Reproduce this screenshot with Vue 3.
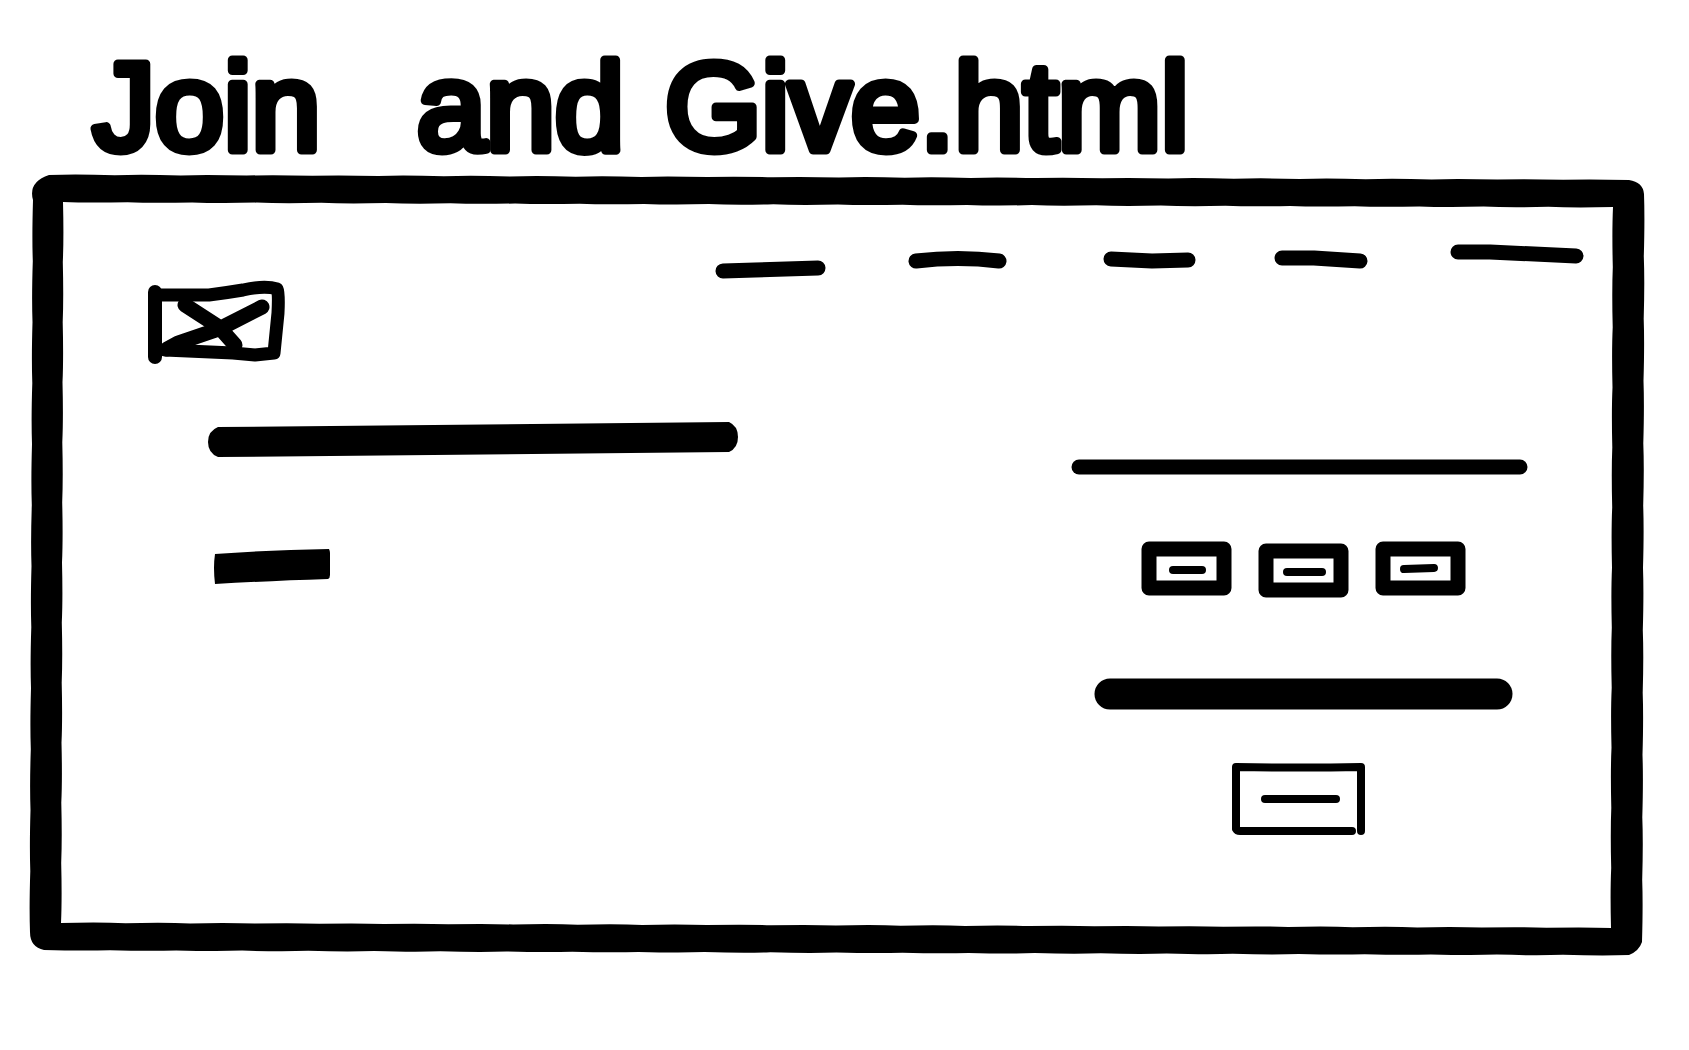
<script setup>
const wave = (x1, y1, x2, y2, steps, amp) => {
  let d = ''
  const len = Math.hypot(x2 - x1, y2 - y1)
  const nx = (y2 - y1) / len
  const ny = -(x2 - x1) / len
  for (let i = 0; i < steps; i++) {
    const m = (i + 0.4) / steps
    const e = (i + 1) / steps
    const mx = x1 + (x2 - x1) * m + nx * amp
    const my = y1 + (y2 - y1) * m + ny * amp
    d += `Q${mx.toFixed(1)} ${my.toFixed(1)} ${(x1 + (x2 - x1) * e).toFixed(1)} ${(y1 + (y2 - y1) * e).toFixed(1)}`
  }
  return d
}

const outline =
  'M20 1' + wave(20, 1, 1600, 6, 24, 1) +
  'Q1614 8 1615 20' + wave(1615, 20, 1613, 768, 12, 1) +
  'Q1610 777 1600 781' + wave(1600, 781, 15, 776, 24, 1) +
  'Q1 773 1 758' + wave(1, 758, 4, 26, 12, 1) +
  'Q-1 8 20 1Z' +
  'M34 28' + wave(34, 28, 1584, 33, 24, -1) +
  wave(1584, 33, 1582, 754, 12, -1) +
  wave(1582, 754, 32, 749, 24, -1) +
  wave(32, 749, 34, 28, 12, -1) + 'Z'

const links = [
  { name: 'Home', width: 111, d: 'M8 31L40 30L103 28' },
  { name: 'About', width: 114, d: 'M8 21Q50 16 91 21' },
  { name: 'Join', width: 88, d: 'M7 19L48 21L84 20' },
  { name: 'Give', width: 94, d: 'M8 18L40 18L86 21' },
  { name: 'Contact', width: 134, d: 'M8 12L40 12L126 16' }
]

const options = [
  { name: 'First option', y: 9, d: 'M33 30H62' },
  { name: 'Second option', y: 11, d: 'M30 32H65' },
  { name: 'Third option', y: 9, d: 'M30 29L60 28' }
]
</script>

<template>
  <div class="page">
    <h1 class="title">
      <svg class="stroke" width="1120" height="150" stroke-width="9">
        <text x="4" y="126">Join</text>
        <text x="328" y="126">and</text>
        <text x="576" y="126">Give.html</text>
      </svg>
    </h1>

    <main class="frame">
      <svg class="border" viewBox="0 0 1616 782" preserveAspectRatio="none" aria-hidden="true">
        <path :d="outline" fill-rule="evenodd" />
      </svg>

      <header class="header">
        <a class="logo" href="#" aria-label="Logo">
          <svg class="stroke" width="140" height="88" stroke-width="13">
            <path d="M8 13V78" stroke-width="14" />
            <path d="M10 16H62Q78 14 96 11Q118 6 130 10Q132 14 131 34L127 74L108 76L86 74L18 71" />
            <path d="M38 26L72 48L88 66M115 28L72 50L31 64L20 70" stroke-width="15" />
          </svg>
        </a>
        <nav class="nav">
          <a v-for="link in links" :key="link.name" href="#" :aria-label="link.name">
            <svg class="stroke" :width="link.width" height="40" stroke-width="15">
              <path :d="link.d" />
            </svg>
          </a>
        </nav>
      </header>

      <div class="body">
        <section class="intro">
          <svg width="532" height="38">
            <path d="M11 6L522 1Q531 5 531 16Q531 27 522 31L11 36Q1 32 1 21Q1 10 11 6Z" />
          </svg>
          <button type="button" aria-label="Learn more">
            <svg width="126" height="38">
              <path d="M8 7Q60 3 122 2Q123 4 123 6V28Q123 31 121 32Q60 34 8 37Q6 20 8 7Z" />
            </svg>
          </button>
        </section>

        <section class="give">
          <svg class="stroke" width="464" height="17" stroke-width="15">
            <path d="M9 9H450" />
          </svg>
          <div class="options">
            <button v-for="option in options" :key="option.name" type="button" :aria-label="option.name">
              <svg class="stroke" width="90" height="58">
                <rect x="9" :y="option.y" width="75" height="39" stroke-width="15" />
                <path :d="option.d" stroke-width="8" />
              </svg>
            </button>
          </div>
          <svg class="stroke" width="464" height="33" stroke-width="31">
            <path d="M40 17H427" />
          </svg>
          <button type="button" aria-label="Submit">
            <svg class="stroke" width="142" height="74" stroke-width="8">
              <path d="M130 69V5Q70 6 5 5V67Q6 69 9 69H121" />
              <path d="M34 37H105" />
            </svg>
          </button>
        </section>
      </div>
    </main>
  </div>
</template>

<style>
body {
  margin: 0;
  background: #fff;
}
</style>

<style scoped>
.page {
  padding: 24px 44px 24px 29px;
  color: #000;
}

.title {
  margin: 0;
  padding-left: 60px;
  font: 400 124px/150px "Liberation Sans", Arial, sans-serif;
}

.title text {
  fill: #000;
}

.frame {
  position: relative;
  padding-bottom: 120px;
}

.border {
  position: absolute;
  inset: 0;
  width: 100%;
  height: 100%;
  overflow: visible;
  pointer-events: none;
}

svg {
  display: block;
  overflow: visible;
}

.stroke {
  fill: none;
  stroke: #000;
  stroke-linecap: round;
  stroke-linejoin: round;
}

button {
  display: block;
  margin: 0;
  padding: 0;
  border: 0;
  background: none;
  cursor: pointer;
}

.header {
  display: flex;
  justify-content: space-between;
  align-items: flex-start;
  padding: 66px 61px 0 118px;
}

.logo {
  padding-top: 39px;
}

.nav {
  display: flex;
  gap: 82px;
}

.body {
  display: flex;
  justify-content: space-between;
  align-items: flex-start;
  padding: 54px 111px 0 178px;
}

.intro {
  display: flex;
  flex-direction: column;
  align-items: flex-start;
  gap: 88px;
}

.give {
  display: flex;
  flex-direction: column;
  align-items: center;
  padding-top: 37px;
}

.options {
  display: flex;
  gap: 27px;
  padding: 65px 0 79px;
}

.give > button {
  margin-top: 52px;
}
</style>
